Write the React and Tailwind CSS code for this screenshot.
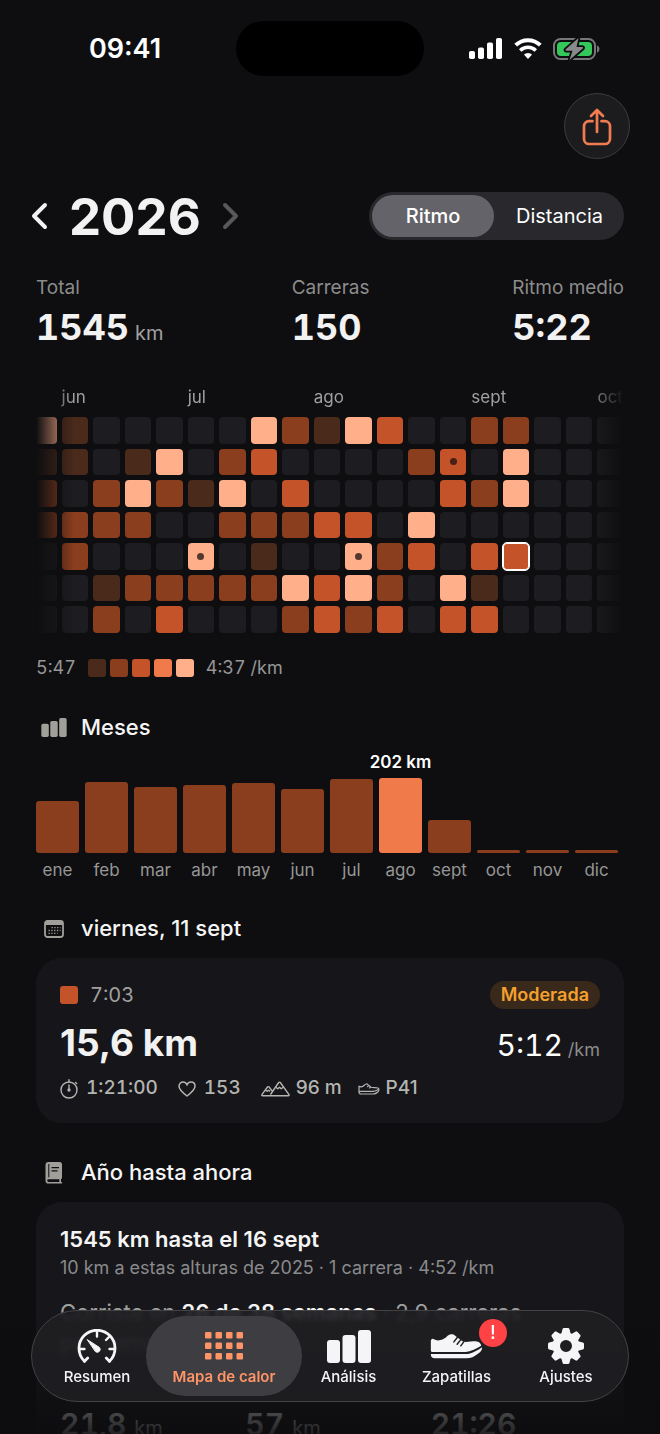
import React, { useState } from 'react';
import clsx from 'clsx';

const LEVELS = ['bg-[#1d1d21]', 'bg-[#4a2a1b]', 'bg-[#8b3e1e]', 'bg-[#c55329]', 'bg-[#f17a4b]', 'bg-[#ffaf89]'];

// One string per weekday, one digit per week
const HEATMAP = [
  '5100000521530022000',
  '1101502300002305000',
  '2025215030000325000',
  '2222002223305000000',
  '0200050100523033000',
  '0012222253520510000',
  '0020300023230330000',
];
const RACE_DAYS = ['1-13', '4-5', '4-10'];
const SELECTED_DAY = '4-15';

const HEATMAP_MONTHS = [
  { label: 'jun', className: 'col-start-2 col-span-3' },
  { label: 'jul', className: 'col-start-6 col-span-3' },
  { label: 'ago', className: 'col-start-10 col-span-3' },
  { label: 'sept', className: 'col-start-15 col-span-3' },
  { label: 'oct', className: 'col-start-19' },
];

const MONTHS = [
  { label: 'ene', height: 52 },
  { label: 'feb', height: 71 },
  { label: 'mar', height: 66 },
  { label: 'abr', height: 68 },
  { label: 'may', height: 70 },
  { label: 'jun', height: 64 },
  { label: 'jul', height: 74 },
  { label: 'ago', height: 75, value: '202 km' },
  { label: 'sept', height: 33 },
  { label: 'oct', height: 3 },
  { label: 'nov', height: 3 },
  { label: 'dic', height: 3 },
];

function BarsIcon({ className }) {
  return (
    <svg viewBox="0 0 44 33" fill="currentColor" className={className}>
      <rect x="0" y="10" width="13" height="23" rx="3" />
      <rect x="15.5" y="5" width="13" height="28" rx="3" />
      <rect x="31" y="0" width="13" height="33" rx="3" />
    </svg>
  );
}

function CalendarIcon({ className }) {
  return (
    <svg viewBox="0 0 20 18" className={className}>
      <rect x="1" y="1" width="18" height="16" rx="2.5" fill="none" stroke="currentColor" strokeWidth="1.8" />
      <path d="M1 5V3.5A2.5 2.5 0 0 1 3.5 1h13A2.5 2.5 0 0 1 19 3.5V5z" fill="currentColor" />
      <path d="M7.5 7.7h9M4.5 10.5h12M4.5 13.3h9" stroke="currentColor" strokeWidth="1.3" strokeDasharray="1.3 1.5" />
    </svg>
  );
}

function BookIcon({ className }) {
  return (
    <svg viewBox="0 0 18 22" className={className}>
      <path fillRule="evenodd" fill="currentColor" d="M3.5 0h11A2.5 2.5 0 0 1 17 2.5V15.5a1.5 1.5 0 0 1-1 1.5v3h.5a.8.8 0 0 1 0 1.6H3.5A3 3 0 0 1 .5 18.5V3a3 3 0 0 1 3-3zM3.6 17.2a1.4 1.4 0 0 0 0 2.8H14.3V17.2zM3.3 2v13.3h1V2zM6.5 5v1.3h7.5V5zM6.5 8.2v1.3h6V8.2z" />
    </svg>
  );
}

function GaugeIcon({ className }) {
  return (
    <svg viewBox="0 0 40 34" fill="none" stroke="currentColor" strokeLinecap="round" className={className}>
      <path d="M7.5 32.2A18 18 0 1 1 32.5 32.2" strokeWidth="2.8" />
      <path d="M7.5 32.2l3.2-3.2M32.5 32.2l-3.2-3.2" strokeWidth="2.8" />
      <path d="M20 3v4.5M3 20h4.5M37 20h-4.5M32 8l-3 3" strokeWidth="2.4" />
      <path d="M10.5 10.8l12 7.7a2.9 2.9 0 0 1-3.8 4.3z" fill="currentColor" strokeWidth="1" strokeLinejoin="round" />
    </svg>
  );
}

function GridIcon({ className }) {
  return (
    <svg viewBox="0 0 38 28" fill="currentColor" className={className}>
      {[0, 10.5, 21].map((y) =>
        [0, 10.5, 21, 31.5].map((x) => <rect key={`${x}-${y}`} x={x} y={y} width="6.5" height="6.5" rx="1.3" />)
      )}
    </svg>
  );
}

function ShoeIcon({ className }) {
  return (
    <svg viewBox="0 0 160 76" fill="currentColor" className={className}>
      <path d="M2 22C2 15 7 12 12 16C19 21 30 20 39 16C49 12 54 2 63 1C69 0 73 2 77 6L98 22C108 27 122 22 138 22C149 23 155 29 155 36C142 44 124 54 106 55H6C2 55 2 51 2 48z" />
      <path d="M2 61H108C126 60 143 50 158 40C158 50 152 56 144 61C134 69 124 74 110 74H14C6 74 2 70 2 61z" />
      <path d="M72 24l11-14M82 31l11-14M93 36l9-12" stroke="#1f1f22" strokeWidth="4.5" strokeLinecap="round" />
    </svg>
  );
}

function ShoeOutlineIcon({ className }) {
  return (
    <svg viewBox="0 0 22 12" fill="none" stroke="currentColor" strokeWidth="1.2" strokeLinejoin="round" className={className}>
      <path d="M1 3.2C3 4.3 5 3.6 6.5 2C7.5.8 9 .6 10 1.6L13 4.2C15 5 18 4.2 20 5C21.5 5.8 21 8 19.8 9C18.5 10.3 17 11 15 11H3C1.5 11 1 10 1 9z" />
      <path d="M1 8.3H15C17 8.3 19 7.5 20.8 6.3M9.3 4l1.2-1.4M11.3 5.4l1.2-1.4" />
    </svg>
  );
}

function GearIcon({ className }) {
  return (
    <svg viewBox="-18 -18 36 36" className={className}>
      <g fill="currentColor">
        {[0, 45, 90, 135, 180, 225, 270, 315].map((a) => (
          <path key={a} transform={`rotate(${a})`} d="M-5-11L-3.5-16.8Q-3.2-18-2-18H2Q3.2-18 3.5-16.8L5-11z" />
        ))}
      </g>
      <circle r="9.7" fill="none" stroke="currentColor" strokeWidth="7.4" />
    </svg>
  );
}

function StatusIcons() {
  return (
    <div className="flex items-center gap-[11px] text-white">
      <svg viewBox="0 0 34 21" fill="currentColor" className="h-[21px] w-[34px]">
        <rect x="0" y="13" width="6" height="8" rx="1.8" />
        <rect x="9" y="9.5" width="6" height="11.5" rx="1.8" />
        <rect x="18" y="4.5" width="6" height="16.5" rx="1.8" />
        <rect x="27" y="0" width="6" height="21" rx="1.8" />
      </svg>
      <svg viewBox="0 0 28 21" className="h-[21px] w-[28px]">
        <path d="M1.7 7.2a17.5 17.5 0 0 1 24.6 0" fill="none" stroke="currentColor" strokeWidth="4" />
        <path d="M6.2 12.4a11 11 0 0 1 15.6 0" fill="none" stroke="currentColor" strokeWidth="3.5" />
        <path d="M9.9 16.6a6 6 0 0 1 8.2 0L14 20.9z" fill="currentColor" />
      </svg>
      <svg viewBox="0 0 47 24" className="h-6 w-[47px]">
        <rect x="1" y="2" width="41" height="20" rx="6.5" fill="none" stroke="#77777a" strokeWidth="2" />
        <path d="M44 8.5c3.3 1 3.3 6 0 7z" fill="#77777a" />
        <rect x="4" y="5" width="35" height="14" rx="4" fill="#34c759" />
        <path d="M25.5 1L12.5 12.5q-.5 1 .8 1.3H19.5L16.5 23L30 11.3q.5-1-.8-1.3H23.5z" fill="#8a8a8d" stroke="#0e0e10" strokeWidth="3.6" strokeLinejoin="round" paintOrder="stroke" />
      </svg>
    </div>
  );
}

function SectionTitle({ icon, children }) {
  return (
    <h2 className="flex h-7 items-center text-[22px] font-medium text-[#f5f5f5]">
      <span className="flex w-[36px] justify-center text-[#a09f99]">{icon}</span>
      <span className="ml-[9px]">{children}</span>
    </h2>
  );
}

function Stat({ label, value, unit }) {
  return (
    <div>
      <dt className="text-[19px] leading-[26px] whitespace-nowrap text-[#8c8c8c]">{label}</dt>
      <dd className="mt-[6px] flex h-10 items-baseline gap-[6px] text-[36px] leading-10 font-bold tabular-nums text-[#f2f2f2]">
        {value}
        {unit && <span className="text-[20px] leading-none font-normal text-[#a0a0a0]">{unit}</span>}
      </dd>
    </div>
  );
}

function Heatmap() {
  return (
    <div className="overflow-hidden [mask-image:linear-gradient(to_right,transparent,black_38px,black_calc(100%-36px),transparent)]">
      <div className="-ml-[6px]">
        <div className="grid grid-cols-19 gap-[5px] text-[17px] leading-5 text-[#a0a0a0]">
          {HEATMAP_MONTHS.map((m) => (
            <span key={m.label} className={m.className}>{m.label}</span>
          ))}
        </div>
        <div className="mt-[10px] grid grid-cols-19 gap-[5px]">
          {HEATMAP.flatMap((row, r) =>
            row.split('').map((level, c) => {
              const key = `${r}-${c}`;
              return (
                <div
                  key={key}
                  className={clsx(
                    'flex aspect-square items-center justify-center rounded-[4px]',
                    LEVELS[level],
                    key === SELECTED_DAY && 'ring-1 ring-inset outline-1 outline-white ring-white'
                  )}
                >
                  {RACE_DAYS.includes(key) && <span className="h-[7px] w-[7px] rounded-full bg-[#1a1010]/75"></span>}
                </div>
              );
            })
          )}
        </div>
      </div>
    </div>
  );
}

function MonthChart() {
  return (
    <div className="mt-[10px] grid grid-cols-12 gap-[6px] pr-[6px]">
      {MONTHS.map((m) => (
        <div key={m.label} className="flex min-w-0 flex-col">
          <div className="flex h-[101px] flex-col items-center justify-end">
            {m.value && <span className="mb-[6px] text-[17px] leading-5 font-semibold whitespace-nowrap text-white">{m.value}</span>}
            <div
              className={clsx('w-full shrink-0 rounded-[3px]', m.value ? 'bg-[#f17a4b]' : 'bg-[#8b3e1e]')}
              style={{ height: m.height }}
            ></div>
          </div>
          <span className="mt-[5px] text-center text-[17px] leading-6 text-[#969696]">{m.label}</span>
        </div>
      ))}
    </div>
  );
}

function RunCard() {
  return (
    <article className="mt-[15px] rounded-[26px] bg-[#16161a] px-6 pt-[23px] pb-[22px]">
      <div className="flex h-7 items-center">
        <span className="h-[18px] w-[18px] rounded-[3px] bg-[#c55329]"></span>
        <time className="ml-3 text-[20px] tabular-nums text-[#a0a0a0]">7:03</time>
        <span className="ml-auto flex h-7 items-center rounded-full bg-[#38291a] px-[11px] text-[18px] font-semibold text-[#f5a02d]">
          Moderada
        </span>
      </div>
      <div className="mt-[14px] flex h-10 items-baseline justify-between leading-10">
        <span className="text-[37px] font-bold text-[#f2f2f2]">15,6 km</span>
        <span className="flex items-baseline gap-[5px] text-[30px] tabular-nums text-white">
          5:12 <span className="text-[18px] leading-none text-[#8c8c8c]">/km</span>
        </span>
      </div>
      <div className="mt-[14px] flex h-6 items-center text-[19px] font-medium text-[#b4b4b1]">
        <svg viewBox="0 0 18 20" fill="none" stroke="currentColor" strokeWidth="1.4" strokeLinecap="round" className="h-5 w-[18px]">
          <circle cx="9" cy="11" r="8" />
          <path d="M9 .8V3M15.5 3.5l1.2 1M9 6v5" />
          <circle cx="9" cy="11" r="1" fill="currentColor" />
        </svg>
        <span className="ml-2 tabular-nums">1:21:00</span>
        <svg viewBox="0 0 18 16" fill="none" stroke="currentColor" strokeWidth="1.5" className="ml-5 h-4 w-[18px]">
          <path d="M9 15C5 12 1 9 1 5.3C1 2.7 2.8 1 5 1C6.8 1 8.2 2 9 3.7C9.8 2 11.2 1 13 1C15.2 1 17 2.7 17 5.3C17 9 13 12 9 15z" />
        </svg>
        <span className="ml-2 tabular-nums">153</span>
        <svg viewBox="0 0 29 16" fill="none" stroke="currentColor" strokeWidth="1.4" strokeLinejoin="round" className="ml-5 h-4 w-[29px]">
          <path d="M11.5 14.8H27.3a.8.8 0 0 0 .7-1.2L19.3 1.5a1 1 0 0 0-1.6 0L9.5 13.5M11.5 14.8H1.6a.8.8 0 0 1-.7-1.2L6.5 6a1 1 0 0 1 1.6 0l3.2 4.2" />
          <path d="M14.8 6.2l2 1.5 1.7-1.5 1.7 1.5 2-1.5M4.5 9.2l1.7 1 1.4-1 1.5 1.2" />
        </svg>
        <span className="ml-[6px]">96 m</span>
        <ShoeOutlineIcon className="ml-4 h-3 w-[22px]" />
        <span className="ml-[6px]">P41</span>
      </div>
    </article>
  );
}

function YearCard() {
  return (
    <article className="mt-[15px] rounded-t-[26px] bg-[#17171b] px-6 pt-[23px] pb-10">
      <h3 className="text-[22px] leading-7 font-semibold text-[#f5f5f5]">1545 km hasta el 16 sept</h3>
      <p className="mt-[3px] text-[18px] leading-6 text-[#8a8a8c]">10 km a estas alturas de 2025 · 1 carrera · 4:52 /km</p>
      <p className="mt-[17px] max-w-[480px] text-[22px] leading-[30px] text-[#a0a0a0]">
        Corriste en <b className="font-semibold text-[#f2f2f2]">26 de 38 semanas</b> · 2,9 carreras por semana.
      </p>
      <div className="mt-[49px] grid grid-cols-3 gap-4 text-[30px] leading-9 font-semibold tabular-nums text-[#f2f2f2]">
        <span>21,8 <small className="text-[20px] font-normal">km</small></span>
        <span>57 <small className="text-[20px] font-normal">km</small></span>
        <span>21:26</span>
      </div>
    </article>
  );
}

const TABS = [
  { id: 'resumen', label: 'Resumen', icon: <GaugeIcon className="h-[34px] w-10" /> },
  { id: 'mapa', label: 'Mapa de calor', icon: <GridIcon className="h-7 w-[38px]" /> },
  { id: 'analisis', label: 'Análisis', icon: <BarsIcon className="h-[33px] w-11" /> },
  { id: 'zapatillas', label: 'Zapatillas', icon: <ShoeIcon className="h-[25px] w-[53px]" />, alert: true },
  { id: 'ajustes', label: 'Ajustes', icon: <GearIcon className="h-9 w-9" /> },
];

function TabBar({ active, onChange }) {
  return (
    <nav className="absolute inset-x-[31px] bottom-8 grid h-[92px] grid-cols-[98fr_156fr_93fr_123fr_96fr] rounded-full border border-[#434346] bg-[#1f1f22]/90 pr-[14px] pl-4 py-[5px] backdrop-blur-[2px]">
      {TABS.map((tab) => (
        <button
          key={tab.id}
          onClick={() => onChange(tab.id)}
          className={clsx(
            'flex flex-col items-center rounded-full pt-[12px] text-[15px] leading-5 whitespace-nowrap',
            tab.id === active ? 'bg-[#3e3e42] font-semibold text-[#ff9466]' : 'font-medium text-[#f5f5f7]'
          )}
        >
          <span className="relative flex h-9 items-center">
            {tab.icon}
            {tab.alert && (
              <span className="absolute -top-[9px] -right-6 flex h-7 w-7 items-center justify-center rounded-full bg-[#ff4245] text-[19px] text-white">
                !
              </span>
            )}
          </span>
          <span className="mt-[3px]">{tab.label}</span>
        </button>
      ))}
    </nav>
  );
}

function App() {
  const [year, setYear] = useState(2026);
  const [metric, setMetric] = useState('Ritmo');
  const [tab, setTab] = useState('mapa');

  return (
    <div className="relative h-screen overflow-hidden bg-[#0e0e10] font-['Inter','Liberation_Sans',sans-serif] antialiased">
      {/* Status bar */}
      <header className="grid h-[93px] grid-cols-[1fr_188px_1fr] items-center pt-1">
        <span className="pt-[2px] pl-[14px] text-center text-[27px] font-semibold text-white">09:41</span>
        <div className="h-[55px] rounded-full bg-black"></div>
        <div className="flex justify-center pr-4"><StatusIcons /></div>
      </header>

      <div className="flex justify-end pr-[30px]">
        <button
          aria-label="Compartir"
          className="flex h-[66px] w-[66px] items-center justify-center rounded-full border border-[#3c3c3f] bg-[#1c1c1f] pt-[2px] text-[#f07c50]"
        >
          <svg viewBox="0 0 30 38" fill="none" stroke="currentColor" strokeWidth="2.7" strokeLinecap="round" strokeLinejoin="round" className="h-[38px] w-[30px]">
            <path d="M10.5 13.2H7A5 5 0 0 0 2 18.2V31a5 5 0 0 0 5 5H23a5 5 0 0 0 5-5V18.2a5 5 0 0 0-5-5H19.5" />
            <path d="M15 24V2M9 8l6-6 6 6" />
          </svg>
        </button>
      </div>

      <main className="px-9">
        <div className="mt-[33px] -ml-[6px] flex h-12 items-center justify-between">
          <div className="flex items-center">
            <button aria-label="Año anterior" onClick={() => setYear(year - 1)} className="text-[#f2f2f2]">
              <svg viewBox="0 0 18 28" fill="none" stroke="currentColor" strokeWidth="4" strokeLinecap="round" strokeLinejoin="round" className="h-7 w-[18px]">
                <path d="M15 3L4 14l11 11" />
              </svg>
            </button>
            <h1 className="mx-[21px] text-[51px] leading-none font-bold text-[#f2f2f2]">{year}</h1>
            <button aria-label="Año siguiente" disabled={year >= 2026} onClick={() => setYear(year + 1)} className="text-[#f2f2f2] disabled:text-[#58585a]">
              <svg viewBox="0 0 18 28" fill="none" stroke="currentColor" strokeWidth="4" strokeLinecap="round" strokeLinejoin="round" className="h-7 w-[18px]">
                <path d="M3 3l11 11L3 25" />
              </svg>
            </button>
          </div>
          <div className="grid h-12 w-[255px] grid-cols-[122fr_127fr] rounded-full bg-[#28282d] p-[3px] text-[20px] text-white">
            {['Ritmo', 'Distancia'].map((m) => (
              <button
                key={m}
                aria-pressed={metric === m}
                onClick={() => setMetric(m)}
                className={clsx('rounded-full', metric === m ? 'bg-[#646369] font-medium' : 'pl-1')}
              >
                {m}
              </button>
            ))}
          </div>
        </div>

        <dl className="mt-[35px] mb-10 grid grid-cols-[254fr_219fr_auto]">
          <Stat label="Total" value="1545" unit="km" />
          <Stat label="Carreras" value="150" />
          <Stat label="Ritmo medio" value="5:22" />
        </dl>

        <Heatmap />

        <div className="mt-[23px] mb-[34px] flex h-6 items-center gap-3 text-[18px] tabular-nums text-[#969696]">
          <span>5:47</span>
          <div className="flex gap-1">
            {LEVELS.slice(1).map((level) => (
              <span key={level} className={clsx('h-[18px] w-[18px] rounded-[3px]', level)}></span>
            ))}
          </div>
          <span>4:37 /km</span>
        </div>

        <SectionTitle icon={<BarsIcon className="h-[19px] w-[26px]" />}>Meses</SectionTitle>
        <MonthChart />

        <section className="mt-[33px]">
          <SectionTitle icon={<CalendarIcon className="h-[18px] w-5" />}>viernes, 11 sept</SectionTitle>
          <RunCard />
        </section>

        <section className="mt-9">
          <SectionTitle icon={<BookIcon className="h-[22px] w-[18px]" />}>Año hasta ahora</SectionTitle>
          <YearCard />
        </section>
      </main>

      {/* Content fades out behind the tab bar */}
      <div className="pointer-events-none absolute inset-x-0 bottom-0 h-[124px] bg-gradient-to-b from-transparent to-[#0c0c0e]/90"></div>
      <TabBar active={tab} onChange={setTab} />
    </div>
  );
}

export default App;
